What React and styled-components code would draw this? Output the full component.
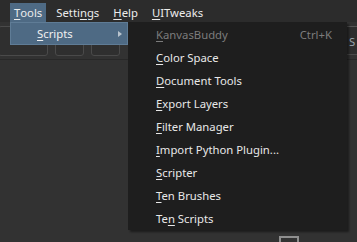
import React from 'react';
import styled, { createGlobalStyle } from 'styled-components';

const GlobalStyle = createGlobalStyle`
  html, body {
    margin: 0;
    padding: 0;
    background: #323232;
    overflow: hidden;
  }
  body {
    font-family: "Noto Sans", "Open Sans", sans-serif;
    font-size: 11.3px;
    color: #e6e6e6;
  }
`;

const Window = styled.div`
  position: relative;
  width: 357px;
  height: 242px;
  display: flex;
  flex-direction: column;
  background: #323232;
`;

const MenuBar = styled.div`
  height: 22px;
  padding: 3px 0 0 10px;
  box-sizing: border-box;
  display: flex;
  gap: 6px;
  background: #2c2c2c;
`;

const MenuTitle = styled.div`
  height: 19px;
  padding: 0 4px;
  display: flex;
  align-items: center;
  background: ${props => props.active ? '#4e6a84' : 'transparent'};
  color: #ececec;
`;

const Key = styled.span`
  text-decoration: underline;
  text-underline-offset: 2px;
`;

const ToolBar = styled.div`
  height: 38px;
  box-sizing: border-box;
  padding: 4px 0 3px 0;
  display: flex;
  gap: 7px;
  border-bottom: 1px solid #282828;
`;

const ToolButton = styled.div`
  width: ${props => props.wide ? '50px' : '29px'};
  margin-left: ${props => props.wide ? '-2px' : '0'};
  border: 1px solid #4a4a4a;
  border-radius: 3px;
  background: #2f2f2f;
  box-sizing: border-box;
`;

const Spacer = styled.div`
  flex: 1;
`;

const DockTab = styled.div`
  width: 11px;
  margin-bottom: 1px;
  border-top: 1px solid #555;
  border-left: 1px solid #3c3c3c;
  background: #2e2e2e;
  color: #9aa4ad;
  padding: 7px 0 0 2px;
  overflow: hidden;
  box-sizing: border-box;
  border-bottom: 1px solid #4a4a4a;
`;

const Canvas = styled.div`
  flex: 1;
  display: flex;
  justify-content: flex-end;
  align-items: flex-end;
  padding-right: 58px;
`;

const MiniWindow = styled.div`
  width: 20px;
  height: 6px;
  border: 2px solid #8e8e8e;
  border-bottom: none;
  box-sizing: border-box;
`;

const Dropdown = styled.div`
  position: absolute;
  left: 10px;
  top: 22px;
  width: 118px;
  height: 23px;
  box-sizing: border-box;
  background: #4e6a84;
  border: 1px solid #5f7c96;
  display: flex;
  align-items: center;
  padding: 0 5px 0 26px;
  justify-content: space-between;
  color: #f0f0f0;
`;

const Arrow = styled.span`
  width: 0;
  height: 0;
  border-top: 3px solid transparent;
  border-bottom: 3px solid transparent;
  border-left: 4px solid #b9c4ce;
`;

const SubMenu = styled.div`
  position: absolute;
  left: 128px;
  top: 22px;
  width: 219px;
  padding: 1px 0 0 0;
  background: #1e1e1e;
  box-shadow: 2px 2px 2px rgba(0, 0, 0, 0.45);
`;

const Item = styled.div`
  height: 23px;
  display: flex;
  align-items: center;
  justify-content: space-between;
  padding: 0 15px 0 28px;
  color: ${props => props.disabled ? '#7c7c7c' : '#e8e8e8'};
`;

const scripts = [
  ['C', 'olor Space'],
  ['D', 'ocument Tools'],
  ['E', 'xport Layers'],
  ['F', 'ilter Manager'],
  ['I', 'mport Python Plugin...'],
  ['S', 'cripter'],
  ['T', 'en Brushes'],
];

export default function App() {
  return (
    <Window>
      <GlobalStyle />
      <MenuBar>
        <MenuTitle active><Key>T</Key>ools</MenuTitle>
        <MenuTitle>Setti<Key>n</Key>gs</MenuTitle>
        <MenuTitle><Key>H</Key>elp</MenuTitle>
        <MenuTitle><Key>U</Key>ITweaks</MenuTitle>
      </MenuBar>
      <ToolBar>
        <ToolButton wide />
        <ToolButton />
        <ToolButton />
        <Spacer />
        <DockTab>S</DockTab>
      </ToolBar>
      <Canvas>
        <MiniWindow />
      </Canvas>

      <Dropdown>
        <span><Key>S</Key>cripts</span>
        <Arrow />
      </Dropdown>
      <SubMenu>
        <Item disabled>
          <span><Key>K</Key>anvasBuddy</span>
          <span>Ctrl+K</span>
        </Item>
        {scripts.map(([k, rest]) => (
          <Item key={k + rest}>
            <span><Key>{k}</Key>{rest}</span>
          </Item>
        ))}
        <Item>
          <span>Te<Key>n</Key> Scripts</span>
        </Item>
      </SubMenu>
    </Window>
  );
}
